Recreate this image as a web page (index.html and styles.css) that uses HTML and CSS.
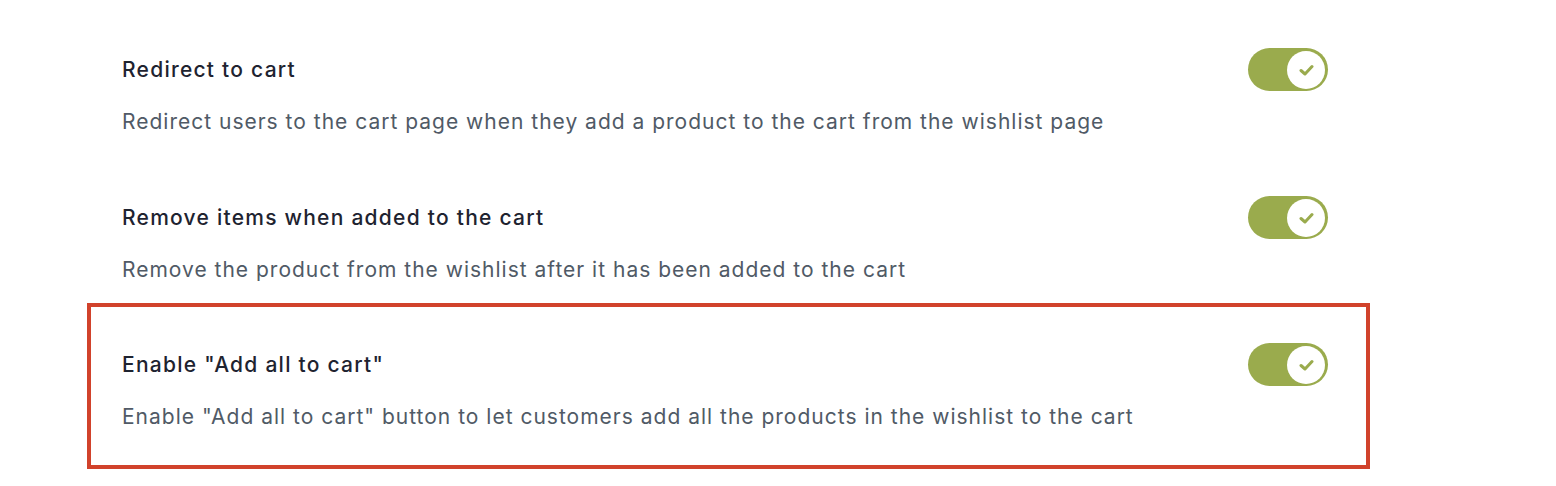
FILE: index.html
```html
<!DOCTYPE html>
<html lang="en">

<head>
    <meta charset="UTF-8">
    <meta name="viewport" content="width=device-width, initial-scale=1.0">
    <title>Wishlist Settings</title>
    <!-- Css Linkup -->
    <link rel="stylesheet" href="styles.css">
</head>

<body>
    <div class="settings">
        <div class="setting">
            <div class="setting-text">
                <div class="setting-title">Redirect to cart</div>
                <div class="setting-desc">Redirect users to the cart page when they add a product to the cart from the wishlist page</div>
            </div>
            <div class="toggle">
                <span class="knob">
                    <svg width="15" height="12" viewBox="0 0 15 12"><path d="M2 6.5 L6 10 L13 2.5" fill="none" stroke="#9aab4d" stroke-width="3" stroke-linecap="round" stroke-linejoin="round"/></svg>
                </span>
            </div>
        </div>

        <div class="setting">
            <div class="setting-text">
                <div class="setting-title">Remove items when added to the cart</div>
                <div class="setting-desc">Remove the product from the wishlist after it has been added to the cart</div>
            </div>
            <div class="toggle">
                <span class="knob">
                    <svg width="15" height="12" viewBox="0 0 15 12"><path d="M2 6.5 L6 10 L13 2.5" fill="none" stroke="#9aab4d" stroke-width="3" stroke-linecap="round" stroke-linejoin="round"/></svg>
                </span>
            </div>
        </div>

        <div class="setting highlighted">
            <div class="setting-text">
                <div class="setting-title">Enable "Add all to cart"</div>
                <div class="setting-desc">Enable "Add all to cart" button to let customers add all the products in the wishlist to the cart</div>
            </div>
            <div class="toggle">
                <span class="knob">
                    <svg width="15" height="12" viewBox="0 0 15 12"><path d="M2 6.5 L6 10 L13 2.5" fill="none" stroke="#9aab4d" stroke-width="3" stroke-linecap="round" stroke-linejoin="round"/></svg>
                </span>
            </div>
        </div>
    </div>
</body>

</html>
```

FILE: styles.css
```css
body {
    margin: 0;
    background-color: #ffffff;
    font-family: Inter, "Noto Sans", sans-serif;
}

.settings {
    width: 1206px;
    padding: 56px 0 0 122px;
    display: flex;
    flex-direction: column;
    gap: 68px;
}

.setting {
    display: flex;
    justify-content: space-between;
    align-items: flex-start;
}

.setting-text {
    display: flex;
    flex-direction: column;
    gap: 24px;
}

.setting-title {
    font-size: 21px;
    line-height: 28px;
    font-weight: 500;
    letter-spacing: 1.25px;
    color: #1e2330;
}

.setting-desc {
    font-size: 21px;
    line-height: 28px;
    letter-spacing: 1px;
    color: #505a66;
}

.highlighted {
    margin: -49px -42px 0 -35px;
    padding: 44px 38px 34px 31px;
    border: 4px solid #d1422b;
}

.toggle {
    width: 80px;
    height: 43px;
    margin-top: -8px;
    border-radius: 22px;
    background-color: #9aab4d;
    display: flex;
    align-items: center;
    justify-content: flex-end;
    padding-right: 3px;
    box-sizing: border-box;
}

.knob {
    width: 38px;
    height: 38px;
    border-radius: 50%;
    background-color: #ffffff;
    display: flex;
    align-items: center;
    justify-content: center;
}
```
